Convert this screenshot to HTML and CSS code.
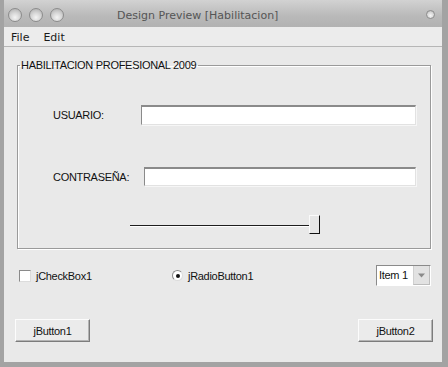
FILE: index.html
```html
<!DOCTYPE html>
<html>
<head>
<meta charset="utf-8">
<link rel="stylesheet" href="styles.css">
</head>
<body>
<div class="window">
  <div class="titlebar">
    <div class="lights"><span class="light"></span><span class="light"></span><span class="light"></span></div>
    <div class="title">Design Preview [Habilitacion]</div>
    <span class="dot"></span>
  </div>
  <div class="menubar"><span>File</span><span>Edit</span></div>
  <div class="content">
    <fieldset class="panel">
      <legend>HABILITACION PROFESIONAL 2009</legend>
      <div class="row row-user"><span class="lbl">USUARIO:</span><div class="field f1"></div></div>
      <div class="row row-pass"><span class="lbl">CONTRASEÑA:</span><div class="field f2"></div></div>
      <div class="slider"><div class="track"></div><div class="thumb"></div></div>
    </fieldset>
    <div class="options">
      <div class="check"><span class="box"></span><span>jCheckBox1</span></div>
      <div class="radio"><span class="circle"><span class="pip"></span></span><span>jRadioButton1</span></div>
      <div class="combo"><span class="combo-text">Item 1</span><span class="combo-btn"><svg width="9" height="5" viewBox="0 0 9 5"><path d="M1 0.5h7L4.5 4.5z" fill="#8a8a8a"/></svg></span></div>
    </div>
    <div class="buttons">
      <div class="btn">jButton1</div>
      <div class="btn">jButton2</div>
    </div>
  </div>
</div>
</body>
</html>
```
FILE: styles.css
```css
html, body {
  margin: 0;
  padding: 0;
}
body {
  width: 448px;
  height: 367px;
  background: #a3a3a3;
  overflow: hidden;
}
.window {
  margin-left: 4px;
  width: 438px;
  height: 362px;
  display: flex;
  flex-direction: column;
  background: #e9e9e9;
}
.titlebar {
  height: 27px;
  flex: none;
  display: flex;
  align-items: center;
  padding-left: 4px;
  box-sizing: border-box;
  background: linear-gradient(#d2d2d2, #b9b9b9 60%, #b2b2b2);
}
.lights {
  display: flex;
  gap: 7px;
  padding-top: 2px;
}
.light {
  width: 14px;
  height: 14px;
  border-radius: 50%;
  box-sizing: border-box;
  border: 1px solid #8c8c8c;
  background: radial-gradient(circle at 50% 70%, #f4f4f4 0, #d6d6d6 45%, #a9a9a9 100%);
}
.title {
  margin-left: 53px;
  padding-top: 3px;
  font-family: "DejaVu Sans", sans-serif;
  font-size: 11px;
  color: #555;
}
.dot {
  margin-left: auto;
  margin-right: 7px;
  margin-top: 2px;
  width: 9px;
  height: 9px;
  border-radius: 50%;
  box-sizing: border-box;
  border: 1px solid #8e8e8e;
  background: radial-gradient(circle at 50% 65%, #f6f6f6 0, #d4d4d4 60%, #a8a8a8 100%);
}
.menubar {
  height: 20px;
  flex: none;
  box-sizing: border-box;
  border-bottom: 1px solid #b6b6b6;
  background: #ececec;
  display: flex;
  align-items: center;
  gap: 14px;
  padding-left: 7px;
  padding-top: 1px;
  font-family: "DejaVu Sans", sans-serif;
  font-size: 11px;
  color: #1a1a1a;
}
.content {
  flex: 1;
  display: flex;
  flex-direction: column;
  font-family: "Liberation Sans", Arial, sans-serif;
  font-size: 11px;
  letter-spacing: -0.3px;
  color: #111;
}
.panel {
  margin: 12px 11px 0 13px;
  padding: 0 14px 14px 0;
  border: 1px solid #9a9a9a;
  box-shadow: inset 1px 1px 0 #fff, 1px 1px 0 #fff;
  min-width: 0;
}
.panel legend {
  margin-left: 2px;
  padding: 0 2px 0 1px;
  line-height: 13px;
}
.row {
  display: flex;
  align-items: center;
  justify-content: space-between;
  padding-left: 35px;
}
.row-user {
  margin-top: 33px;
}
.row-pass {
  margin-top: 42px;
}
.field {
  background: #fff;
  box-sizing: border-box;
  border-top: 2px solid #8a8a8a;
  border-left: 1px solid #8a8a8a;
  border-right: 1px solid #e2e2e2;
  border-bottom: 1px solid #e2e2e2;
  box-shadow: 1px 1px 0 #f6f6f6;
}
.f1 {
  width: 275px;
  height: 20px;
}
.f2 {
  width: 272px;
  height: 19px;
}
.slider {
  margin-top: 29px;
  padding-left: 112px;
  display: flex;
  align-items: center;
}
.track {
  width: 179px;
  height: 1px;
  background: #1e1e1e;
  box-shadow: 0 1px 0 #fff;
  margin-top: 1px;
}
.thumb {
  width: 11px;
  height: 19px;
  box-sizing: border-box;
  background: #e6e6e6;
  border-top: 1px solid #fafafa;
  border-left: 1px solid #fafafa;
  border-right: 1px solid #111;
  border-bottom: 1px solid #111;
}
.options {
  margin-top: 16px;
  height: 21px;
  display: flex;
  align-items: center;
  padding-left: 15px;
  padding-right: 11px;
}
.check {
  width: 153px;
  display: flex;
  align-items: center;
  gap: 5px;
}
.box {
  width: 12px;
  height: 12px;
  box-sizing: border-box;
  background: #fff;
  border-top: 1px solid #8a8a8a;
  border-left: 1px solid #8a8a8a;
  border-right: 1px solid #dcdcdc;
  border-bottom: 1px solid #dcdcdc;
}
.radio {
  flex: 1;
  display: flex;
  align-items: center;
  gap: 5px;
}
.circle {
  width: 11px;
  height: 11px;
  border-radius: 50%;
  box-sizing: border-box;
  background: #fff;
  border: 1px solid;
  border-color: #8a8a8a #dcdcdc #dcdcdc #8a8a8a;
  display: flex;
  align-items: center;
  justify-content: center;
}
.pip {
  width: 4px;
  height: 4px;
  border-radius: 50%;
  background: #111;
}
.combo {
  width: 55px;
  height: 21px;
  box-sizing: border-box;
  display: flex;
  border-top: 1px solid #8a8a8a;
  border-left: 1px solid #8a8a8a;
  border-right: 1px solid #fff;
  border-bottom: 1px solid #fff;
  background: #fff;
}
.combo-text {
  flex: 1;
  padding-left: 2px;
  line-height: 19px;
}
.combo-btn {
  width: 17px;
  box-sizing: border-box;
  background: #e2e2e2;
  border-left: 1px solid #d0d0d0;
  border-right: 1px solid #bdbdbd;
  border-bottom: 1px solid #bdbdbd;
  display: flex;
  align-items: center;
  justify-content: center;
}
.buttons {
  margin-top: 33px;
  display: flex;
  justify-content: space-between;
  padding-left: 11px;
  padding-right: 9px;
}
.btn {
  width: 75px;
  height: 23px;
  box-sizing: border-box;
  background: #ebebeb;
  border: 1px solid;
  border-color: #fcfcfc #7c7c7c #7c7c7c #fcfcfc;
  box-shadow: inset -1px -1px 0 #b4b4b4;
  display: flex;
  align-items: center;
  justify-content: center;
}
```
